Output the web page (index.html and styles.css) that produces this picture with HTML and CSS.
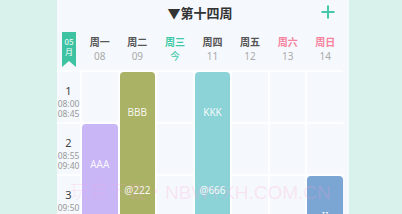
FILE: index.html
```html
<!DOCTYPE html>
<html lang="zh-CN">
<head>
<meta charset="utf-8">
<title>第十四周</title>
<link rel="stylesheet" href="styles.css">
</head>
<body>
<main class="panel">
  <header class="topbar">
    <span class="spacer"></span>
    <h1 class="title">▼第十四周</h1>
    <button class="add" aria-label="添加">
      <svg width="14" height="14" viewBox="0 0 14 14"><path d="M0.5 7H13.5M7 0.5V13.5" stroke="#43c9a9" stroke-width="2" fill="none"/></svg>
    </button>
  </header>
  <div class="days">
    <div class="month"><span>05</span><span>月</span></div>
    <div class="day"><span class="name">周一</span><span class="date">08</span></div>
    <div class="day"><span class="name">周二</span><span class="date">09</span></div>
    <div class="day today"><span class="name">周三</span><span class="date">今</span></div>
    <div class="day"><span class="name">周四</span><span class="date">11</span></div>
    <div class="day"><span class="name">周五</span><span class="date">12</span></div>
    <div class="day weekend"><span class="name">周六</span><span class="date">13</span></div>
    <div class="day weekend"><span class="name">周日</span><span class="date">14</span></div>
  </div>
  <div class="grid">
    <div class="slot r1"><span class="num">1</span><span class="time">08:00</span><span class="time">08:45</span></div>
    <div class="slot r2"><span class="num">2</span><span class="time">08:55</span><span class="time">09:40</span></div>
    <div class="slot r3"><span class="num">3</span><span class="time">09:50</span><span class="time">10:35</span></div>
    <div class="slot r4"><span class="num">4</span><span class="time">10:45</span><span class="time">11:30</span></div>

    <div class="course aaa"><span class="cname">AAA</span><span class="loc">@111</span></div>
    <div class="course bbb"><span class="cname">BBB</span><span class="loc">@222</span></div>
    <div class="course kkk"><span class="cname">KKK</span><span class="loc">@666</span></div>
    <div class="course blue"><span class="cname">II</span><span class="loc">@888</span></div>

    <div class="cell"></div><div class="cell"></div><div class="cell"></div><div class="cell"></div>
    <div class="cell"></div><div class="cell"></div><div class="cell"></div><div class="cell"></div>
    <div class="cell"></div><div class="cell"></div><div class="cell"></div><div class="cell"></div>
    <div class="cell"></div><div class="cell"></div><div class="cell"></div><div class="cell"></div>
    <div class="cell"></div>
  </div>
</main>
<div class="watermark">玩意下载・NBWYXH.COM.CN</div>
</body>
</html>
```
FILE: styles.css
```css
html, body {
  margin: 0;
  padding: 0;
}
body {
  width: 402px;
  height: 214px;
  overflow: hidden;
  background: #daf2ec;
  font-family: "Noto Sans", "Noto Sans CJK SC", sans-serif;
  position: relative;
}
.panel {
  margin-left: 57px;
  width: 292px;
  height: 214px;
  background: #f5f8fc;
  box-sizing: border-box;
  padding-right: 6px;
}
.topbar {
  height: 26px;
  display: grid;
  grid-template-columns: 1fr auto 1fr;
  align-items: center;
}
.title {
  margin: 0;
  font-size: 13px;
  line-height: 26px;
  font-weight: 700;
  color: #333;
  font-family: "Noto Sans CJK SC", sans-serif;
}
.add {
  justify-self: end;
  margin-right: 8px;
  padding: 0;
  border: 0;
  background: none;
  width: 14px;
  height: 14px;
  display: flex;
  margin-top: -2px;
}
.days {
  height: 44px;
  display: grid;
  grid-template-columns: 23px repeat(7, 1fr);
  column-gap: 2px;
}
.month {
  margin-top: 6px;
  margin-left: 5px;
  width: 14px;
  height: 35px;
  background: #3ec3a2;
  clip-path: polygon(0 0, 100% 0, 100% 100%, 50% 83%, 0 100%);
  display: flex;
  flex-direction: column;
  align-items: center;
  padding-top: 5px;
  box-sizing: border-box;
  color: #fff;
  font-size: 8px;
  line-height: 10px;
  font-family: "Noto Sans CJK SC", sans-serif;
}
.day {
  display: flex;
  flex-direction: column;
  align-items: center;
  padding-top: 9px;
}
.day .name {
  font-size: 10px;
  line-height: 14px;
  font-weight: 700;
  color: #555;
  font-family: "Noto Sans CJK SC", sans-serif;
}
.day .date {
  font-size: 10px;
  line-height: 14px;
  color: #aaa;
  font-family: "Noto Sans", "Noto Sans CJK SC", sans-serif;
}
.day.today .name, .day.today .date {
  color: #3ec9a8;
}
.day.weekend .name {
  color: #f6829e;
}
.grid {
  display: grid;
  grid-template-columns: 23px repeat(7, 1fr);
  grid-auto-rows: 50px;
  gap: 2px;
  padding-top: 2px;
  background: #fdfeff;
}
.slot {
  grid-column: 1;
  background: #f5f8fc;
  display: flex;
  flex-direction: column;
  align-items: center;
  justify-content: center;
  padding-top: 8px;
  box-sizing: border-box;
}
.slot.r1 { grid-row: 1; }
.slot.r2 { grid-row: 2; }
.slot.r3 { grid-row: 3; }
.slot.r4 { grid-row: 4; }
.slot .num {
  font-size: 11px;
  line-height: 16px;
  color: #444;
}
.slot .time {
  font-size: 8.5px;
  line-height: 10px;
  color: #999;
}
.cell {
  background: #f5f8fc;
  border-radius: 2px;
}
.course {
  border-radius: 4px;
  display: flex;
  flex-direction: column;
  align-items: center;
  padding-top: 34px;
  box-sizing: border-box;
  color: rgba(255, 255, 255, 0.92);
  font-size: 10px;
  line-height: 12px;
}
.course .loc {
  margin-top: 66px;
}
.aaa { grid-column: 2; grid-row: 2 / span 3; background: #c8b6f6; }
.bbb { grid-column: 3; grid-row: 1 / span 3; background: #a9b265; }
.kkk { grid-column: 5; grid-row: 1 / span 3; background: #8cd3d7; }
.blue { grid-column: 8; grid-row: 3 / span 2; background: #7ba6d3; }
.watermark {
  position: absolute;
  left: 70px;
  top: 180px;
  font-size: 19px;
  line-height: 26px;
  white-space: nowrap;
  color: rgba(255, 160, 215, 0.22);
  font-family: "Liberation Sans", "Noto Sans CJK SC", sans-serif;
  font-weight: 300;
  pointer-events: none;
}
```
